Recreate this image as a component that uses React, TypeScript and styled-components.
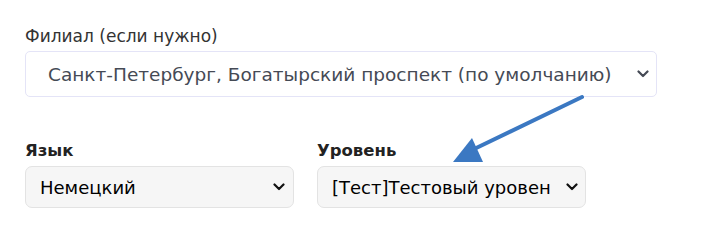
import React, { FC } from "react";
import styled, { createGlobalStyle } from "styled-components";

const GlobalStyle = createGlobalStyle`
  html, body {
    margin: 0;
    padding: 0;
    background: #ffffff;
  }
  body {
    font-family: "DejaVu Sans", Verdana, sans-serif;
  }
`;

const Page = styled.div`
  position: relative;
  width: 720px;
  height: 249px;
  padding: 25px 0 0 25px;
  box-sizing: border-box;
  overflow: hidden;
`;

const Field = styled.div<{ $width: number }>`
  display: flex;
  flex-direction: column;
  width: ${(p) => p.$width}px;
`;

const Label = styled.label<{ $bold?: boolean }>`
  font-size: ${(p) => (p.$bold ? 16.5 : 17)}px;
  line-height: 22px;
  margin: 0 0 4px 0;
  color: ${(p) => (p.$bold ? "#222222" : "#333333")};
  font-weight: ${(p) => (p.$bold ? 700 : 400)};
`;

const Row = styled.div`
  display: flex;
  gap: 23px;
  margin-top: 43px;
`;

const SelectWrap = styled.div`
  position: relative;
  width: 100%;

  svg {
    position: absolute;
    top: 50%;
    transform: translateY(-50%);
    pointer-events: none;
  }
`;

const Select = styled.select<{ $variant: "outline" | "filled" }>`
  appearance: none;
  -webkit-appearance: none;
  width: 100%;
  box-sizing: border-box;
  margin: 0;
  font-family: "DejaVu Sans", Verdana, sans-serif;
  font-size: ${(p) => (p.$variant === "outline" ? 18.5 : 18)}px;
  outline: none;
  height: ${(p) => (p.$variant === "outline" ? 46 : 42)}px;
  border-radius: ${(p) => (p.$variant === "outline" ? 5 : 7)}px;
  border: 1px solid ${(p) => (p.$variant === "outline" ? "#e4e4f7" : "#e3e3e3")};
  background: ${(p) => (p.$variant === "outline" ? "#ffffff" : "#f6f6f6")};
  color: ${(p) => (p.$variant === "outline" ? "#454a55" : "#000000")};
  padding: ${(p) => (p.$variant === "outline" ? "0 40px 0 22px" : "0 35px 0 14px")};
`;

const Chevron: FC<{ right: number; color: string }> = ({ right, color }) => (
  <svg width="12" height="8" viewBox="0 0 12 8" style={{ right }}>
    <path d="M1.5 1.5 L6 6 L10.5 1.5" fill="none" stroke={color} strokeWidth="2.2" strokeLinecap="round" strokeLinejoin="round" />
  </svg>
);

const Pointer = styled.svg`
  position: absolute;
  left: 0;
  top: 0;
  pointer-events: none;
`;

const App: FC = () => (
  <>
    <GlobalStyle />
    <Page>
      <Field $width={632}>
        <Label>Филиал (если нужно)</Label>
        <SelectWrap>
          <Select $variant="outline" defaultValue="spb">
            <option value="spb">Санкт-Петербург, Богатырский проспект (по умолчанию)</option>
          </Select>
          <Chevron right={8} color="#454a55" />
        </SelectWrap>
      </Field>
      <Row>
        <Field $width={269}>
          <Label $bold>Язык</Label>
          <SelectWrap>
            <Select $variant="filled" defaultValue="de">
              <option value="de">Немецкий</option>
            </Select>
            <Chevron right={9} color="#111111" />
          </SelectWrap>
        </Field>
        <Field $width={269}>
          <Label $bold>Уровень</Label>
          <SelectWrap>
            <Select $variant="filled" defaultValue="test">
              <option value="test">[Тест]Тестовый уровень</option>
            </Select>
            <Chevron right={8} color="#111111" />
          </SelectWrap>
        </Field>
      </Row>
      <Pointer width="720" height="249" viewBox="0 0 720 249">
        <line x1="582" y1="97" x2="470" y2="151" stroke="#3b78c2" strokeWidth="4" strokeLinecap="round" />
        <polygon points="453,162 472,138 483,162" fill="#3b78c2" />
      </Pointer>
    </Page>
  </>
);

export default App;
